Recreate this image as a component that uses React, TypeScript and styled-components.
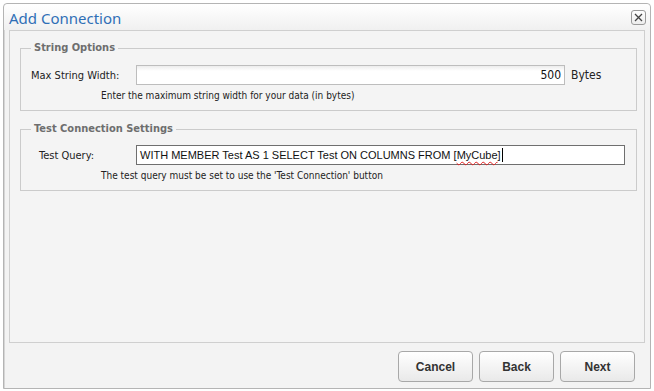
import React from 'react';
import styled, { createGlobalStyle } from 'styled-components';

const GlobalStyle = createGlobalStyle`
  html, body {
    margin: 0;
    padding: 0;
    background: #ffffff;
  }
  body {
    width: 654px;
    height: 391px;
    overflow: hidden;
  }
`;

const Dialog = styled.div`
  box-sizing: border-box;
  margin: 3px 0 0 3px;
  width: 648px;
  height: 386px;
  border: 1px solid #b4b4b4;
  border-radius: 4px 4px 0 0;
  box-shadow: inset 1px 0 0 #d6d6d6;
  background: #f3f3f3;
  display: flex;
  flex-direction: column;
`;

const TitleBar = styled.div`
  height: 26px;
  display: flex;
  align-items: center;
  justify-content: space-between;
  padding: 0 4px 0 5px;
  background: linear-gradient(#ffffff, #f0f0f0);
  border-radius: 4px 4px 0 0;
`;

const Title = styled.span`
  font-family: 'Noto Sans', 'Open Sans', sans-serif;
  font-size: 15px;
  color: #2f6fb6;
  line-height: 1;
  margin-top: 2px;
`;

const CloseButton = styled.button`
  box-sizing: border-box;
  width: 15px;
  height: 15px;
  padding: 0;
  margin-top: 1px;
  border: 1px solid #9a9a9a;
  border-radius: 3px;
  background: linear-gradient(#ffffff, #ececec);
  display: flex;
  align-items: center;
  justify-content: center;
`;

const Panel = styled.div`
  flex: 1;
  margin: 0 5px;
  border: 1px solid #cfcfcf;
  background: #f4f4f4;
  padding: 8px 7px 0 10px;
`;

const Group = styled.fieldset`
  margin: 0 0 9px 0;
  padding: 0 0 8px 0;
  border: 1px solid #cbcbcb;
  min-width: 0;
`;

const Legend = styled.legend`
  margin-left: 10px;
  padding: 0 3px;
  font-family: 'DejaVu Sans Condensed', 'DejaVu Sans', sans-serif;
  font-weight: bold;
  font-size: 11px;
  line-height: 18px;
  color: #6e6e6e;
`;

const Row = styled.div<{ $gap: number }>`
  display: flex;
  align-items: center;
  margin-top: ${p => p.$gap}px;
`;

const Label = styled.label<{ $indent: number }>`
  box-sizing: border-box;
  width: 115px;
  padding-left: ${p => p.$indent}px;
  font-family: 'DejaVu Sans Condensed', 'DejaVu Sans', sans-serif;
  font-size: 11px;
  color: #222;
`;

const Field = styled.div<{ $width: number; $focused?: boolean; $right?: boolean }>`
  box-sizing: border-box;
  width: ${p => p.$width}px;
  height: 20px;
  padding: 0 3px;
  display: flex;
  align-items: center;
  justify-content: ${p => (p.$right ? 'flex-end' : 'flex-start')};
  border: 1px solid ${p => (p.$focused ? '#6f6f6f' : '#bdbdbd')};
  background: ${p => (p.$focused ? '#ffffff' : 'linear-gradient(#ececec, #ffffff 5px)')};
  font-family: ${p => (p.$right ? "'DejaVu Sans Condensed', 'DejaVu Sans', sans-serif" : "'Liberation Sans', Arial, sans-serif")};
  font-size: ${p => (p.$right ? 12 : 11)}px;
  color: #111;
  white-space: pre;
`;

const Misspelled = styled.span`
  text-decoration: underline wavy #e02020;
  text-decoration-thickness: 1px;
  text-underline-offset: 2px;
`;

const Caret = styled.span`
  display: inline-block;
  width: 1px;
  height: 14px;
  background: #000;
  margin-left: 1px;
`;

const Unit = styled.span`
  margin-left: 6px;
  font-family: 'DejaVu Sans Condensed', 'DejaVu Sans', sans-serif;
  font-size: 12px;
  color: #222;
`;

const Help = styled.div`
  margin: 5px 0 0 80px;
  font-family: 'DejaVu Sans Condensed', 'DejaVu Sans', sans-serif;
  font-size: 10px;
  line-height: 12px;
  color: #222;
`;

const Footer = styled.div`
  height: 45px;
  display: flex;
  align-items: center;
  justify-content: flex-end;
  gap: 6px;
  padding: 2px 15px 0 0;
  box-sizing: border-box;
`;

const Button = styled.button`
  box-sizing: border-box;
  width: 75px;
  height: 31px;
  border: 1px solid #a8a8a8;
  border-radius: 4px;
  background: linear-gradient(#ffffff, #e9e9e9);
  font-family: 'Liberation Sans', Arial, sans-serif;
  font-weight: bold;
  font-size: 12px;
  color: #333;
  padding: 0;
`;

export default function App() {
  return (
    <>
      <GlobalStyle />
      <Dialog>
        <TitleBar>
          <Title>Add Connection</Title>
          <CloseButton aria-label="Close">
            <svg width="9" height="9" viewBox="0 0 9 9">
              <path d="M1 1 L8 8 M8 1 L1 8" stroke="#444" strokeWidth="1.3" />
            </svg>
          </CloseButton>
        </TitleBar>
        <Panel>
          <Group>
            <Legend>String Options</Legend>
            <Row $gap={8}>
              <Label $indent={10}>Max String Width:</Label>
              <Field $width={429} $right>500</Field>
              <Unit>Bytes</Unit>
            </Row>
            <Help>Enter the maximum string width for your data (in bytes)</Help>
          </Group>
          <Group>
            <Legend>Test Connection Settings</Legend>
            <Row $gap={7}>
              <Label $indent={18}>Test Query:</Label>
              <Field $width={489} $focused>
                WITH MEMBER Test AS 1 SELECT Test ON COLUMNS FROM [<Misspelled>MyCube</Misspelled>]
                <Caret />
              </Field>
            </Row>
            <Help>The test query must be set to use the 'Test Connection' button</Help>
          </Group>
        </Panel>
        <Footer>
          <Button>Cancel</Button>
          <Button>Back</Button>
          <Button>Next</Button>
        </Footer>
      </Dialog>
    </>
  );
}
